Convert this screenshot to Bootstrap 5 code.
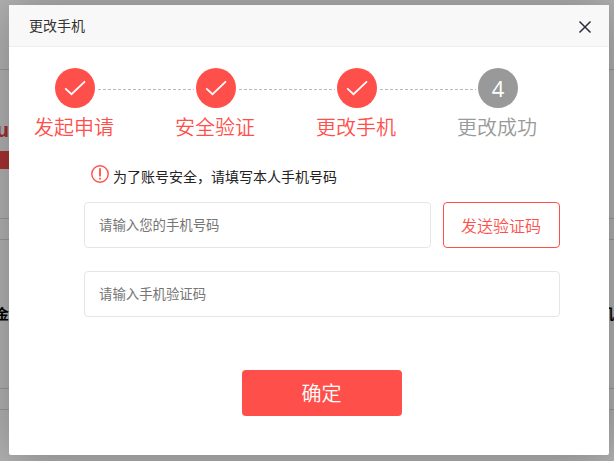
<!DOCTYPE html>
<html lang="zh-CN">
<head>
<meta charset="utf-8">
<meta name="viewport" content="width=device-width, initial-scale=1">
<title>更改手机</title>
<link href="https://cdn.jsdelivr.net/npm/bootstrap@5.3.0/dist/css/bootstrap.min.css" rel="stylesheet">
<style>
:root{--brand:#ff4f4b}
html,body{height:100%;overflow:hidden}
body{font-family:"Noto Sans","Noto Sans CJK SC",sans-serif;font-size:14px;color:#333}
.cjk,.cjk input{font-family:"Noto Sans CJK SC",sans-serif}
/* page behind the dialog */
.page-top{height:70px}
.page-panel{height:149px}
.page-gap{height:21px}
.page-top,.page-panel,.page-gap{border-bottom:1px solid #dcdcdc}
.site-word{width:9px;height:81px;padding-top:46px;font-size:20px;line-height:28px;color:#e8423f;direction:rtl}
.site-bar{width:9px;height:18px;background:#f04848}
.page-line{padding-top:63px;font-size:14px;line-height:20px;color:#000}
.cut{width:9px;white-space:nowrap}
.cut-left{direction:rtl}
.cut-right{width:5px;margin-left:auto}
.cut-right span{margin-left:-9px}
.shade{background:rgba(0,0,0,.3)}
/* dialog */
.dialog-box{width:600px;height:450px;margin:5px 0 0 9px;border-radius:2px;box-shadow:1px 1px 50px rgba(0,0,0,.3)}
.dialog-head{height:42px;padding:0 17px 0 20px;background:#f8f8f8;border-bottom:1px solid #eee}
.dialog-close{width:14px;height:14px;margin-top:2px}
.steps{padding:21px 0 0 24px}
.step{width:141px}
.step:last-child{width:82px}
.step-dot{width:40px;height:40px;margin-left:22px;border-radius:50%;background:var(--brand);color:#fff;font-size:22px;flex:none}
.step-num{font-family:"Open Sans",sans-serif}
.step-rule{flex:1;height:1px;margin:3px 0 0 3px;background:repeating-linear-gradient(90deg,#bbb 0 3px,transparent 3px 5px)}
.step-line{margin-right:-20px}
.step-name{font-size:20px;line-height:28px;margin:5px 0 0 1px;color:var(--brand);font-weight:350;white-space:nowrap}
.step-todo .step-dot{background:#999}
.step-todo .step-name{color:#999}
.form-area{margin:22px 49px 0 75px}
.notice{height:22px;margin:0 0 17px 7px;color:#222}
.notice span{margin:4px 0 0 4px}
.field{height:46px;padding:0 14px 2px;border:1px solid #e6e6e6;border-radius:4px;font-size:13.4px}
.field-phone{width:347px}
.field-row{margin-bottom:23px}
.field::placeholder{color:#757575;opacity:1}
.btn-code{width:117px;height:46px;padding:0 1px 0 0;border:1px solid var(--brand);border-radius:4px;color:var(--brand);background:#fff;font-size:16px;font-weight:350;flex:none}
.btn-sure{width:160px;height:46px;margin-top:53px;padding:0 1px 0 0;border:0;border-radius:4px;background:var(--brand);color:#fff;font-size:20px;font-weight:350}
</style>
</head>
<body class="position-relative">
<div class="vh-100 overflow-hidden" aria-hidden="true">
  <div class="page-top"></div>
  <div class="page-panel">
    <div class="site-word fw-bold overflow-hidden">u</div>
    <div class="site-bar"></div>
  </div>
  <div class="page-gap"></div>
  <div class="page-panel page-line cjk fw-bold d-flex">
    <div class="cut cut-left overflow-hidden">金</div>
    <div class="cut cut-right overflow-hidden"><span>机</span></div>
  </div>
  <div class="page-gap"></div>
</div>
<div class="shade position-absolute top-0 start-0 w-100 h-100 overflow-hidden d-flex align-items-start">
  <div class="dialog-box bg-white flex-shrink-0" role="dialog">
    <div class="dialog-head d-flex align-items-center justify-content-between cjk">
      <span>更改手机</span>
      <svg class="dialog-close" viewBox="0 0 14 14" fill="none" stroke="#2d2c3b" stroke-width="1.5"><path d="M1.5 1.5l11 11M12.5 1.5l-11 11"/></svg>
    </div>
    <div class="steps d-flex cjk">
      <div class="step">
        <div class="step-line d-flex align-items-center"><div class="step-dot d-flex align-items-center justify-content-center"><svg width="22" height="16" viewBox="0 0 22 16" fill="none" stroke="#fff" stroke-width="1.8"><path d="M1.2 8.3l6.3 5.9L21 1.3"/></svg></div><div class="step-rule"></div></div>
        <div class="step-name">发起申请</div>
      </div>
      <div class="step">
        <div class="step-line d-flex align-items-center"><div class="step-dot d-flex align-items-center justify-content-center"><svg width="22" height="16" viewBox="0 0 22 16" fill="none" stroke="#fff" stroke-width="1.8"><path d="M1.2 8.3l6.3 5.9L21 1.3"/></svg></div><div class="step-rule"></div></div>
        <div class="step-name">安全验证</div>
      </div>
      <div class="step">
        <div class="step-line d-flex align-items-center"><div class="step-dot d-flex align-items-center justify-content-center"><svg width="22" height="16" viewBox="0 0 22 16" fill="none" stroke="#fff" stroke-width="1.8"><path d="M1.2 8.3l6.3 5.9L21 1.3"/></svg></div><div class="step-rule"></div></div>
        <div class="step-name">更改手机</div>
      </div>
      <div class="step step-todo">
        <div class="d-flex"><div class="step-dot step-num d-flex align-items-center justify-content-center">4</div></div>
        <div class="step-name">更改成功</div>
      </div>
    </div>
    <form class="form-area cjk">
      <div class="notice d-flex align-items-center">
        <svg width="18" height="18" viewBox="0 0 18 18" fill="none" stroke="#ff4f4b"><circle cx="9" cy="9" r="8.2" stroke-width="1.4"/><path d="M9 3.2v8.2M9 12.8v1.8" stroke-width="1.8"/></svg>
        <span>为了账号安全，请填写本人手机号码</span>
      </div>
      <div class="d-flex field-row">
        <input class="form-control field field-phone" type="text" placeholder="请输入您的手机号码">
        <button class="btn btn-code ms-auto" type="button">发送验证码</button>
      </div>
      <input class="form-control field" type="text" placeholder="请输入手机验证码">
      <div class="text-center"><button class="btn btn-sure" type="button">确定</button></div>
    </form>
  </div>
</div>
<script src="https://cdn.jsdelivr.net/npm/bootstrap@5.3.0/dist/js/bootstrap.bundle.min.js"></script>
</body>
</html>
